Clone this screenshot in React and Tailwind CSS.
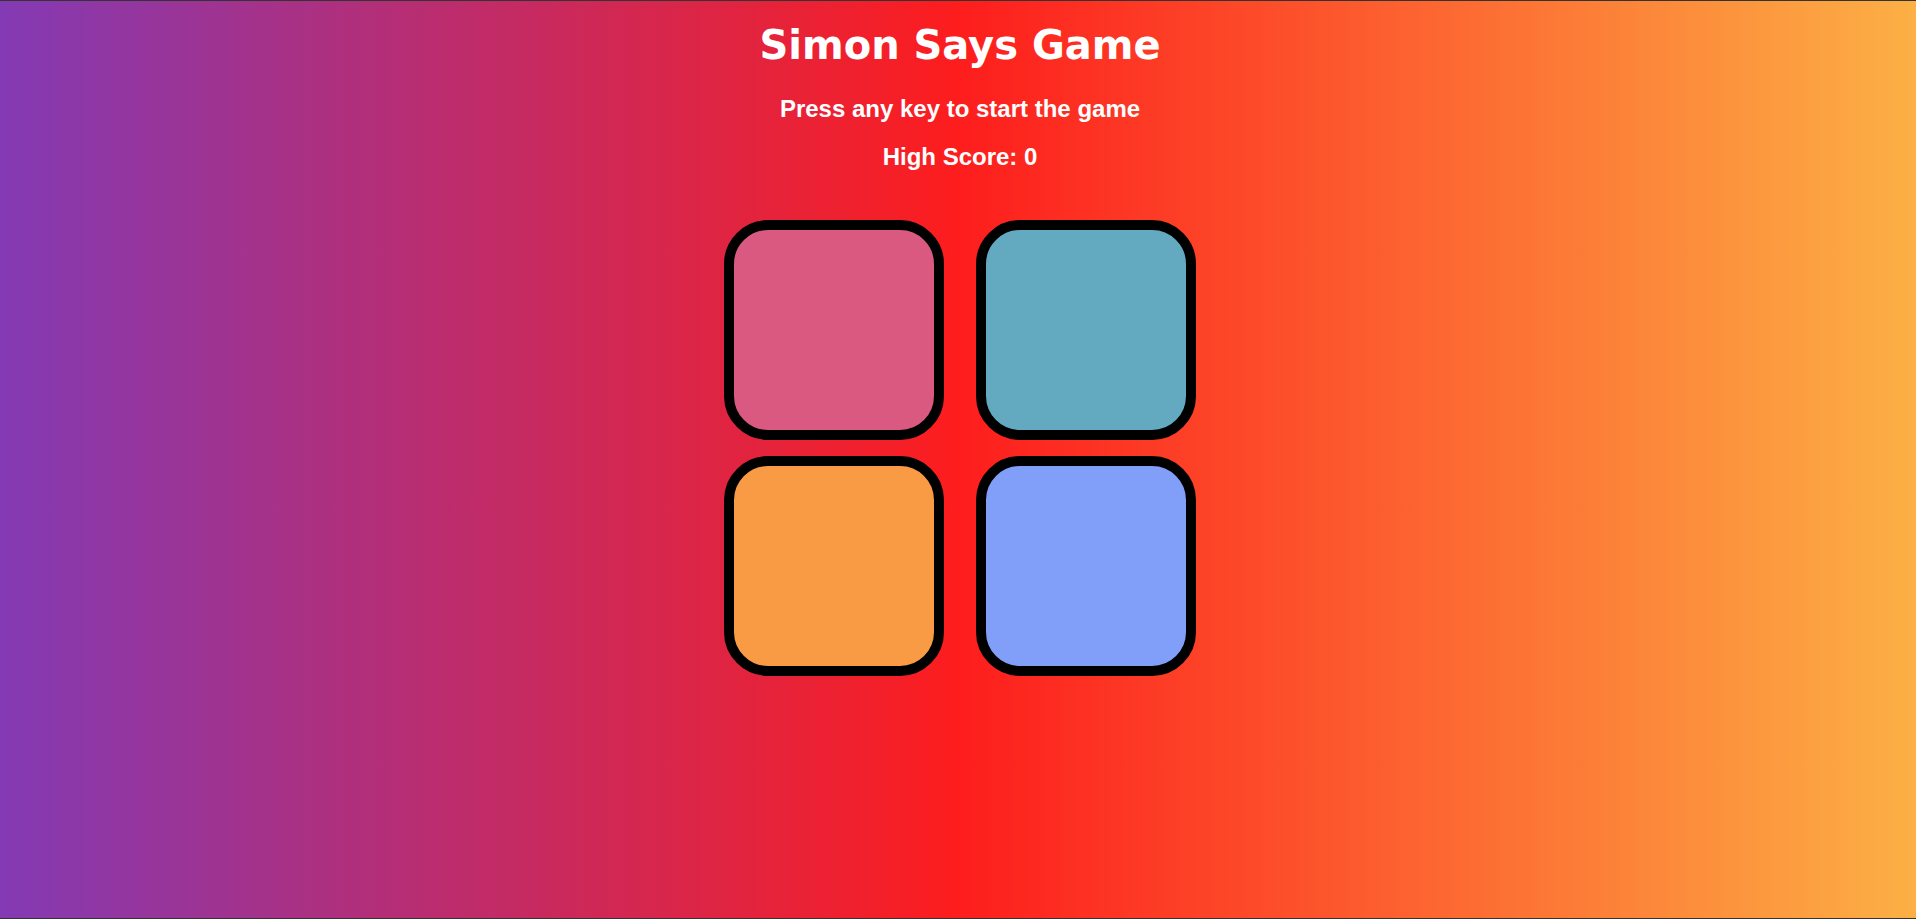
export default function App() {
  const boxes = [
    "bg-[#d95980]",
    "bg-[#63aac0]",
    "bg-[#f99b45]",
    "bg-[#819ff9]",
  ];

  return (
    <div className="h-[919px] w-full overflow-hidden border-t border-b border-[#333333] bg-[linear-gradient(to_right,#833ab4,#fd1d1d,#fcb045)] text-white">
      <div className="flex flex-col items-center pl-[4px]">
        <h1 className="mt-[20px] font-[family-name:'DejaVu_Sans',Verdana,sans-serif] text-[40px] font-bold leading-[48px]">
          Simon Says Game
        </h1>
        <h2 className="mt-[26px] font-[family-name:'Liberation_Sans',Arial,sans-serif] text-[24px] font-bold leading-[28px]">
          Press any key to start the game
        </h2>
        <h3 className="mt-[20px] font-[family-name:'Liberation_Sans',Arial,sans-serif] text-[24px] font-bold leading-[28px]">
          High Score: 0
        </h3>

        <div className="mt-[49px] grid grid-cols-2 gap-x-[32px] gap-y-[16px]">
          {boxes.map((c, i) => (
            <div
              key={i}
              className={`h-[220px] w-[220px] rounded-[20%] border-[10px] border-black ${c}`}
            />
          ))}
        </div>
      </div>
    </div>
  );
}
